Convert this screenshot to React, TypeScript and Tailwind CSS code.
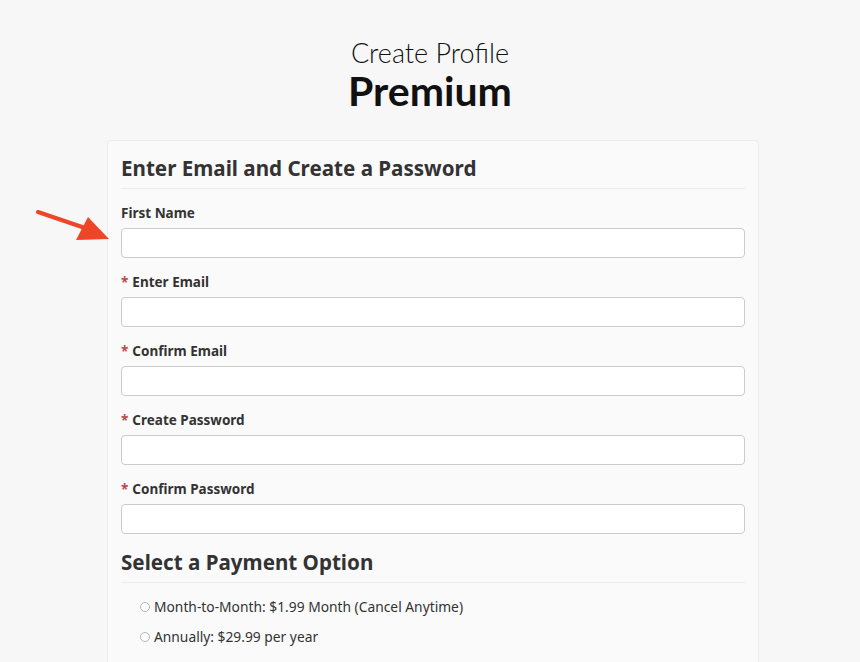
import React from 'react';

const fields = [
  { label: 'First Name', required: false },
  { label: 'Enter Email', required: true },
  { label: 'Confirm Email', required: true },
  { label: 'Create Password', required: true },
  { label: 'Confirm Password', required: true },
];

const plans = [
  'Month-to-Month: $1.99 Month (Cancel Anytime)',
  'Annually: $29.99 per year',
];

function Arrow() {
  return (
    <svg
      className="absolute left-[36px] top-[205px]"
      width="76"
      height="38"
      viewBox="0 0 76 38"
    >
      <line x1="2" y1="7" x2="52" y2="24" stroke="#ee4527" strokeWidth="4" strokeLinecap="round" />
      <polygon points="73,34 40,35 52,12" fill="#ee4527" />
    </svg>
  );
}

export default function App() {
  return (
    <div
      className="relative min-h-[662px] overflow-hidden bg-[#f7f7f7] text-[#333]"
      style={{ fontFamily: '"Noto Sans", "Open Sans", sans-serif' }}
    >
      <div className="pt-[39px] text-center text-[#111]" style={{ fontFamily: 'Lato, "Noto Sans", sans-serif' }}>
        <div className="text-[27px] font-light leading-[27px]">Create Profile</div>
        <div className="mt-[2px] text-[41px] font-bold leading-[45px]">Premium</div>
      </div>

      <Arrow />

      <div className="ml-[107px] mt-[27px] w-[652px] rounded-t-[4px] border border-[#ececec] bg-[#fafafa] px-[13px] pt-[13px] pb-[40px]">
        <h2 className="border-b border-[#ebebeb] pb-[6px] text-[20.6px] font-bold leading-[28px] text-[#333]">
          Enter Email and Create a Password
        </h2>

        <div className="mt-[14px] flex flex-col gap-[14px]">
          {fields.map((f) => (
            <div key={f.label}>
              <label className="block text-[13.5px] font-bold leading-[20px] text-[#333]">
                {f.required && <span className="mr-[4px] text-[#b94a48]">*</span>}
                {f.label}
              </label>
              <input
                type="text"
                className="mt-[5px] block h-[30px] w-full rounded-[4px] border border-[#cccccc] bg-white"
              />
            </div>
          ))}
        </div>

        <h2 className="mt-[14px] border-b border-[#ebebeb] pb-[6px] text-[20.6px] font-bold leading-[28px] text-[#333]">
          Select a Payment Option
        </h2>

        <div className="mt-[14px] flex flex-col gap-[10px] pl-[19px]">
          {plans.map((p) => (
            <label key={p} className="flex items-center text-[13.8px] leading-[20px] text-[#333]">
              <span className="mr-[4px] inline-block h-[10px] w-[10px] rounded-full border border-[#b5b5b5] bg-white" />
              {p}
            </label>
          ))}
        </div>
      </div>
    </div>
  );
}
